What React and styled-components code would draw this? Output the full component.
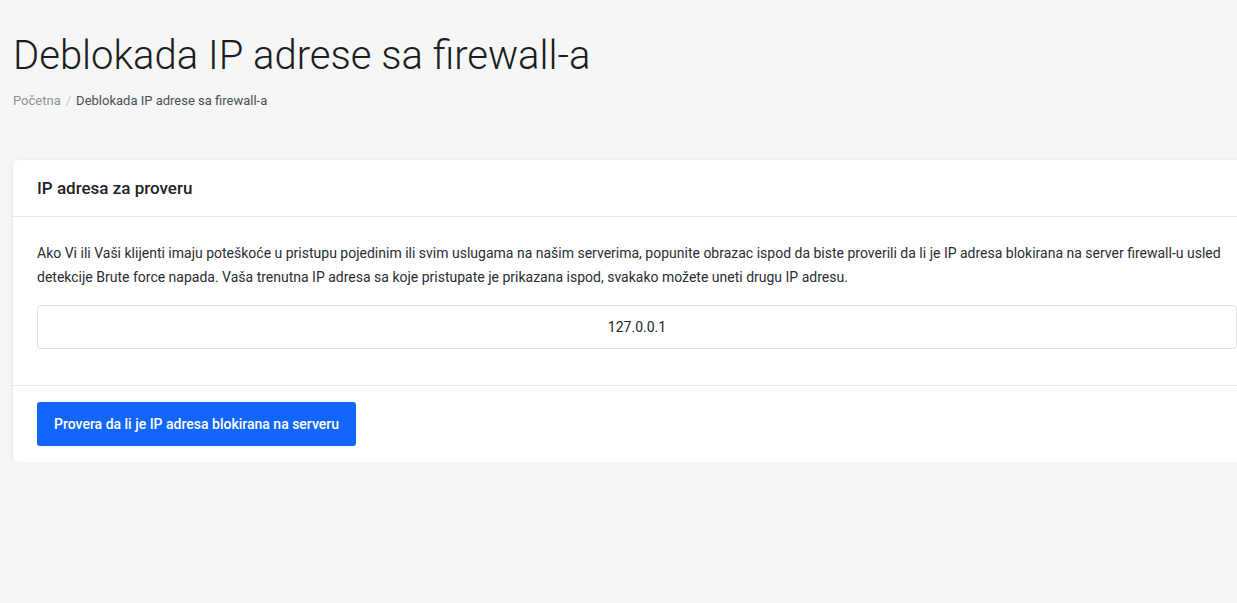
import React from "react";
import styled, { createGlobalStyle } from "styled-components";

const Global = createGlobalStyle`
  html, body { margin: 0; padding: 0; background: #f6f6f6; overflow: hidden; }
  body { font-family: Roboto, "Liberation Sans", sans-serif; color: #212529; }
  * { box-sizing: border-box; }
`;

const Page = styled.div`
  padding: 24px 13px 0;
`;

const Title = styled.h1`
  margin: 0;
  font-size: 40px;
  font-weight: 300;
  line-height: 64px;
  color: #1b1d22;
`;

const Crumbs = styled.nav`
  display: flex;
  align-items: center;
  gap: 5px;
  margin-top: 3px;
  font-size: 13px;
  line-height: 20px;
`;

const Crumb = styled.span`
  color: ${(p) => (p.$active ? "#4a4f57" : "#8c9098")};
`;

const Sep = styled.span`
  color: #c4c7cc;
`;

const Card = styled.section`
  margin-top: 49px;
  width: 1248px;
  background: #fff;
  border-radius: 5px;
  box-shadow: 0 1px 6px rgba(0, 0, 0, 0.08);
`;

const CardHeader = styled.header`
  padding: 16px 24px;
  border-bottom: 1px solid #e6e7e9;
  font-size: 17px;
  font-weight: 500;
  line-height: 24px;
  color: #1f2227;
`;

const CardBody = styled.div`
  padding: 24px 24px 36px;
  border-bottom: 1px solid #e6e7e9;
`;

const Text = styled.p`
  margin: 0 0 16px;
  font-size: 14px;
  line-height: 24px;
  color: #2a2d33;
`;

const Input = styled.input`
  display: block;
  width: 100%;
  height: 44px;
  border: 1px solid #dfe1e4;
  border-radius: 4px;
  text-align: center;
  font-family: inherit;
  font-size: 14px;
  color: #212529;
  background: #fff;
  outline: none;
`;

const CardFooter = styled.footer`
  padding: 16px 24px;
`;

const Button = styled.button`
  height: 44px;
  padding: 0 17px;
  border: none;
  border-radius: 3px;
  background: #1266fd;
  color: #fff;
  font-family: inherit;
  font-size: 14px;
  font-weight: 500;
  cursor: pointer;
`;

export default function App() {
  return (
    <>
      <Global />
      <Page>
        <Title>Deblokada IP adrese sa firewall-a</Title>
        <Crumbs>
          <Crumb>Početna</Crumb>
          <Sep>/</Sep>
          <Crumb $active>Deblokada IP adrese sa firewall-a</Crumb>
        </Crumbs>
        <Card>
          <CardHeader>IP adresa za proveru</CardHeader>
          <CardBody>
            <Text>
              Ako Vi ili Vaši klijenti imaju poteškoće u pristupu pojedinim ili svim uslugama na našim serverima, popunite obrazac ispod da biste proverili da li je IP adresa blokirana na server firewall-u usled detekcije Brute force napada. Vaša trenutna IP adresa sa koje pristupate je prikazana ispod, svakako možete uneti drugu IP adresu.
            </Text>
            <Input defaultValue="127.0.0.1" />
          </CardBody>
          <CardFooter>
            <Button>Provera da li je IP adresa blokirana na serveru</Button>
          </CardFooter>
        </Card>
      </Page>
    </>
  );
}
